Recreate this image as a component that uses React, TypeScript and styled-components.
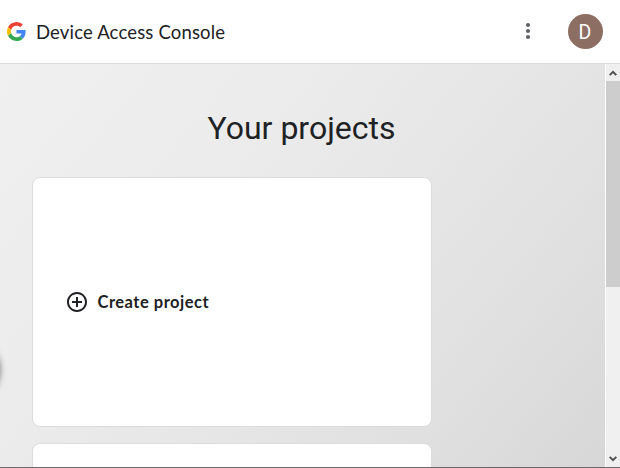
import React from "react";
import styled, { createGlobalStyle } from "styled-components";

const GlobalStyle = createGlobalStyle`
  * { box-sizing: border-box; }
  html, body { margin: 0; padding: 0; overflow: hidden; }
`;

const Window = styled.div`
  display: flex;
  flex-direction: column;
  width: 620px;
  height: 468px;
  overflow: hidden;
  background: #fff;
  border-bottom: 1px solid #6b6969;
  color: #202124;
`;

const Header = styled.header`
  display: flex;
  flex: none;
  align-items: center;
  height: 64px;
  padding: 0 17.5px 0 6.5px;
  border-bottom: 1px solid #dcdcdc;
`;

const Brand = styled.div`
  flex: 1;
  display: flex;
  align-items: center;
  gap: 10.5px;
`;

const ProductName = styled.span`
  font: 400 18.5px/24px Lato, sans-serif;
  letter-spacing: 0.16px;
  white-space: nowrap;
`;

const MenuButton = styled.button`
  display: flex;
  padding: 0;
  border: 0;
  margin: 0 27.5px 2px 0;
  background: none;
`;

const Avatar = styled.div`
  width: 35px;
  height: 35px;
  border-radius: 50%;
  background: #8d6e63;
  color: #fff;
  font: 400 19.5px/38px Roboto, sans-serif;
  text-align: center;
`;

const Viewport = styled.div`
  display: flex;
  flex: 1;
  min-height: 0;
`;

const Content = styled.main`
  position: relative;
  flex: 1;
  padding: 44px 32px 0;
  overflow: hidden;
  background: linear-gradient(130deg, #f0f0f0 0%, #ebebeb 36%, #e5e5e5 60%, #dfdfdf 80%, #d7d7d7 100%);
`;

const Title = styled.h1`
  margin: 0 2px 29px 0;
  font: 400 32px/40px Roboto, sans-serif;
  text-align: center;
`;

const Cards = styled.div`
  display: flex;
  flex-direction: column;
  gap: 16px;
`;

const Card = styled.section`
  display: flex;
  flex: none;
  align-items: center;
  width: 400px;
  height: 250px;
  padding: 0 32px;
  border: 1px solid #dadce0;
  border-radius: 8px;
  background: #fff;
`;

const CreateButton = styled.button`
  display: flex;
  align-items: center;
  gap: 8.5px;
  padding: 0;
  border: 0;
  background: none;
  color: #202124;
  font: 700 16.5px/24px Lato, sans-serif;
  letter-spacing: 0.5px;
  white-space: nowrap;
`;

const EdgeShadow = styled.div`
  position: absolute;
  left: -17px;
  top: 289px;
  width: 16px;
  height: 34px;
  border-radius: 50%;
  box-shadow: 0 0 6px 1px rgba(0, 0, 0, 0.5);
`;

const Scrollbar = styled.div`
  display: flex;
  flex-direction: column;
  justify-content: space-between;
  width: 15px;
  border-left: 1px solid #fff;
  background: #f0f0f0;
`;

const Arrow = styled.div`
  display: grid;
  place-items: center;
  height: 17px;
`;

const Thumb = styled.div`
  height: 206px;
  margin-bottom: auto;
  background: #cdcdcd;
`;

const GoogleLogo = () => (
  <svg width="19" height="19" viewBox="0 0 48 48">
    <path fill="#EA4335" d="M24 9.5c3.54 0 6.71 1.22 9.21 3.6l6.85-6.85C35.9 2.38 30.47 0 24 0 14.62 0 6.51 5.38 2.56 13.22l7.98 6.19C12.43 13.72 17.74 9.5 24 9.5z" />
    <path fill="#4285F4" d="M46.98 24.55c0-1.57-.15-3.09-.38-4.55H24v9.02h12.94c-.58 2.96-2.26 5.48-4.78 7.18l7.73 6c4.51-4.18 7.09-10.36 7.09-17.65z" />
    <path fill="#FBBC05" d="M10.53 28.59A14.5 14.5 0 0 1 9.77 24c0-1.6.27-3.14.76-4.59l-7.98-6.19A23.9 23.9 0 0 0 0 24c0 3.88.92 7.54 2.56 10.78l7.97-6.19z" />
    <path fill="#34A853" d="M24 48c6.48 0 11.93-2.13 15.89-5.81l-7.73-6c-2.15 1.45-4.92 2.3-8.16 2.3-6.26 0-11.57-4.22-13.47-9.91l-7.98 6.19C6.51 42.62 14.62 48 24 48z" />
  </svg>
);

const MoreIcon = () => (
  <svg width="24" height="24" viewBox="0 0 24 24" fill="#5f6368">
    <circle cx="12" cy="6" r="2.1" />
    <circle cx="12" cy="12" r="2.1" />
    <circle cx="12" cy="18" r="2.1" />
  </svg>
);

const AddCircleIcon = () => (
  <svg width="24" height="24" viewBox="0 0 24 24" fill="#202124">
    <path d="M13 7h-2v4H7v2h4v4h2v-4h4v-2h-4V7zm-1-5C6.48 2 2 6.48 2 12s4.48 10 10 10 10-4.48 10-10S17.52 2 12 2zm0 18c-4.41 0-8-3.59-8-8s3.59-8 8-8 8 3.59 8 8-3.59 8-8 8z" />
  </svg>
);

const Chevron = ({ down }: { down?: boolean }) => (
  <svg width="8" height="6" viewBox="0 0 8 6" fill="none" stroke="#505050" strokeWidth="2">
    <path d={down ? "M.7 .9 4 4.2 7.3 .9" : "M.7 5.1 4 1.8 7.3 5.1"} />
  </svg>
);

export default function App() {
  return (
    <>
      <GlobalStyle />
      <Window>
        <Header>
          <Brand>
            <GoogleLogo />
            <ProductName>Device Access Console</ProductName>
          </Brand>
          <MenuButton aria-label="More options">
            <MoreIcon />
          </MenuButton>
          <Avatar>D</Avatar>
        </Header>
        <Viewport>
          <Content>
            <Title>Your projects</Title>
            <Cards>
              <Card>
                <CreateButton>
                  <AddCircleIcon />
                  Create project
                </CreateButton>
              </Card>
              <Card />
            </Cards>
            <EdgeShadow />
          </Content>
          <Scrollbar>
            <Arrow>
              <Chevron />
            </Arrow>
            <Thumb />
            <Arrow>
              <Chevron down />
            </Arrow>
          </Scrollbar>
        </Viewport>
      </Window>
    </>
  );
}
